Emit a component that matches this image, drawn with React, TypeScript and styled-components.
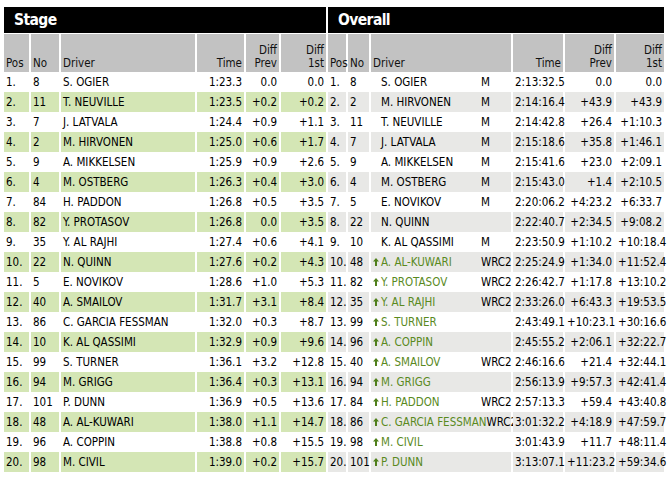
import * as React from "react";
import styled, { createGlobalStyle } from "styled-components";

const GlobalStyle = createGlobalStyle`
  * { box-sizing: border-box; }
  body {
    margin: 0;
    background: #fff;
    font-family: "DejaVu Sans Condensed", "DejaVu Sans", sans-serif;
    font-size: 11.5px;
    color: #000;
  }
`;

const Page = styled.div`
  display: flex;
  gap: 2px;
  padding: 7px 0 0 4px;
`;

const Panel = styled.div<{ $w: number }>`
  display: flex;
  flex-direction: column;
  width: ${(p) => p.$w}px;
`;

const TitleBar = styled.div`
  height: 26px;
  background: #000;
  color: #fff;
  font-weight: 700;
  font-size: 15.5px;
  letter-spacing: -0.6px;
  line-height: 26px;
  padding-left: 10px;
  margin-bottom: 1px;
`;

const Row = styled.div<{ $cols: string }>`
  display: grid;
  grid-template-columns: ${(p) => p.$cols};
  column-gap: 2px;
`;

const HeadCell = styled.div<{ $right?: boolean }>`
  height: 38px;
  background: #c2c2c2;
  display: flex;
  flex-direction: column;
  justify-content: flex-end;
  align-items: ${(p) => (p.$right ? "flex-end" : "flex-start")};
  text-align: ${(p) => (p.$right ? "right" : "left")};
  padding: 0 2px 2px;
  line-height: 13px;
  color: #111;
`;

const Cell = styled.div<{ $bg: string; $right?: boolean }>`
  height: 20px;
  line-height: 20px;
  background: ${(p) => p.$bg};
  text-align: ${(p) => (p.$right ? "right" : "left")};
  padding: 0 2px;
  white-space: nowrap;
`;

const DriverCell = styled(Cell)<{ $green?: boolean }>`
  display: grid;
  grid-template-columns: 1fr 28px;
  align-items: center;
  color: ${(p) => (p.$green ? "#5a8a1e" : "#000")};
`;

const DriverName = styled.span`
  display: flex;
  align-items: center;
  white-space: nowrap;
`;

const ClassTag = styled.span`
  color: #000;
`;

const Arrow = styled.svg<{ $show: boolean }>`
  width: 6px;
  height: 8px;
  margin-right: 2px;
  visibility: ${(p) => (p.$show ? "visible" : "hidden")};
  flex: none;
`;

type StageRow = [string, string, string, string, string, string];
type OverallRow = [string, string, string, string, string, string, string, boolean];

const stage: StageRow[] = [
  ["1.", "8", "S. OGIER", "1:23.3", "0.0", "0.0"],
  ["2.", "11", "T. NEUVILLE", "1:23.5", "+0.2", "+0.2"],
  ["3.", "7", "J. LATVALA", "1:24.4", "+0.9", "+1.1"],
  ["4.", "2", "M. HIRVONEN", "1:25.0", "+0.6", "+1.7"],
  ["5.", "9", "A. MIKKELSEN", "1:25.9", "+0.9", "+2.6"],
  ["6.", "4", "M. OSTBERG", "1:26.3", "+0.4", "+3.0"],
  ["7.", "84", "H. PADDON", "1:26.8", "+0.5", "+3.5"],
  ["8.", "82", "Y. PROTASOV", "1:26.8", "0.0", "+3.5"],
  ["9.", "35", "Y. AL RAJHI", "1:27.4", "+0.6", "+4.1"],
  ["10.", "22", "N. QUINN", "1:27.6", "+0.2", "+4.3"],
  ["11.", "5", "E. NOVIKOV", "1:28.6", "+1.0", "+5.3"],
  ["12.", "40", "A. SMAILOV", "1:31.7", "+3.1", "+8.4"],
  ["13.", "86", "C. GARCIA FESSMAN", "1:32.0", "+0.3", "+8.7"],
  ["14.", "10", "K. AL QASSIMI", "1:32.9", "+0.9", "+9.6"],
  ["15.", "99", "S. TURNER", "1:36.1", "+3.2", "+12.8"],
  ["16.", "94", "M. GRIGG", "1:36.4", "+0.3", "+13.1"],
  ["17.", "101", "P. DUNN", "1:36.9", "+0.5", "+13.6"],
  ["18.", "48", "A. AL-KUWARI", "1:38.0", "+1.1", "+14.7"],
  ["19.", "96", "A. COPPIN", "1:38.8", "+0.8", "+15.5"],
  ["20.", "98", "M. CIVIL", "1:39.0", "+0.2", "+15.7"],
];

const overall: OverallRow[] = [
  ["1.", "8", "S. OGIER", "M", "2:13:32.5", "0.0", "0.0", false],
  ["2.", "2", "M. HIRVONEN", "M", "2:14:16.4", "+43.9", "+43.9", false],
  ["3.", "11", "T. NEUVILLE", "M", "2:14:42.8", "+26.4", "+1:10.3", false],
  ["4.", "7", "J. LATVALA", "M", "2:15:18.6", "+35.8", "+1:46.1", false],
  ["5.", "9", "A. MIKKELSEN", "M", "2:15:41.6", "+23.0", "+2:09.1", false],
  ["6.", "4", "M. OSTBERG", "M", "2:15:43.0", "+1.4", "+2:10.5", false],
  ["7.", "5", "E. NOVIKOV", "M", "2:20:06.2", "+4:23.2", "+6:33.7", false],
  ["8.", "22", "N. QUINN", "", "2:22:40.7", "+2:34.5", "+9:08.2", false],
  ["9.", "10", "K. AL QASSIMI", "M", "2:23:50.9", "+1:10.2", "+10:18.4", false],
  ["10.", "48", "A. AL-KUWARI", "WRC2", "2:25:24.9", "+1:34.0", "+11:52.4", true],
  ["11.", "82", "Y. PROTASOV", "WRC2", "2:26:42.7", "+1:17.8", "+13:10.2", true],
  ["12.", "35", "Y. AL RAJHI", "WRC2", "2:33:26.0", "+6:43.3", "+19:53.5", true],
  ["13.", "99", "S. TURNER", "", "2:43:49.1", "+10:23.1", "+30:16.6", true],
  ["14.", "96", "A. COPPIN", "", "2:45:55.2", "+2:06.1", "+32:22.7", true],
  ["15.", "40", "A. SMAILOV", "WRC2", "2:46:16.6", "+21.4", "+32:44.1", true],
  ["16.", "94", "M. GRIGG", "", "2:56:13.9", "+9:57.3", "+42:41.4", true],
  ["17.", "84", "H. PADDON", "WRC2", "2:57:13.3", "+59.4", "+43:40.8", true],
  ["18.", "86", "C. GARCIA FESSMAN", "WRC2", "3:01:32.2", "+4:18.9", "+47:59.7", true],
  ["19.", "98", "M. CIVIL", "", "3:01:43.9", "+11.7", "+48:11.4", true],
  ["20.", "101", "P. DUNN", "", "3:13:07.1", "+11:23.2", "+59:34.6", true],
];

const stageCols = "25px 28px 134px 47px 33px 45px";
const overallCols = "18px 21px 140px 50px 49px 48px";

const UpArrow = ({ show }: { show: boolean }) => (
  <Arrow $show={show} viewBox="0 0 6 8">
    <path d="M3 0 L6 3.6 L4 3.6 L4 8 L2 8 L2 3.6 L0 3.6 Z" fill="#4f7f1a" />
  </Arrow>
);

function HeaderRow({ cols }: { cols: string }) {
  return (
    <Row $cols={cols}>
      <HeadCell>Pos</HeadCell>
      <HeadCell>No</HeadCell>
      <HeadCell>Driver</HeadCell>
      <HeadCell $right>Time</HeadCell>
      <HeadCell $right>
        <div>Diff</div>
        <div>Prev</div>
      </HeadCell>
      <HeadCell $right>
        <div>Diff</div>
        <div>1st</div>
      </HeadCell>
    </Row>
  );
}

export default function App() {
  return (
    <Page>
      <GlobalStyle />
      <Panel $w={322}>
        <TitleBar>Stage</TitleBar>
        <HeaderRow cols={stageCols} />
        {stage.map((r, i) => {
          const bg = i % 2 === 1 ? "#d4e6b5" : "#fff";
          return (
            <Row $cols={stageCols} key={r[0]}>
              <Cell $bg={bg}>{r[0]}</Cell>
              <Cell $bg={bg}>{r[1]}</Cell>
              <Cell $bg={bg}>{r[2]}</Cell>
              <Cell $bg={bg} $right>{r[3]}</Cell>
              <Cell $bg={bg} $right>{r[4]}</Cell>
              <Cell $bg={bg} $right>{r[5]}</Cell>
            </Row>
          );
        })}
      </Panel>
      <Panel $w={336}>
        <TitleBar>Overall</TitleBar>
        <HeaderRow cols={overallCols} />
        {overall.map((r, i) => {
          const bg = i % 2 === 1 ? "#e8e8e6" : "#fff";
          return (
            <Row $cols={overallCols} key={r[0]}>
              <Cell $bg={bg}>{r[0]}</Cell>
              <Cell $bg={bg}>{r[1]}</Cell>
              <DriverCell $bg={bg} $green={r[7]}>
                <DriverName>
                  <UpArrow show={r[7]} />
                  {r[2]}
                </DriverName>
                <ClassTag>{r[3]}</ClassTag>
              </DriverCell>
              <Cell $bg={bg} $right>{r[4]}</Cell>
              <Cell $bg={bg} $right>{r[5]}</Cell>
              <Cell $bg={bg} $right>{r[6]}</Cell>
            </Row>
          );
        })}
      </Panel>
    </Page>
  );
}
